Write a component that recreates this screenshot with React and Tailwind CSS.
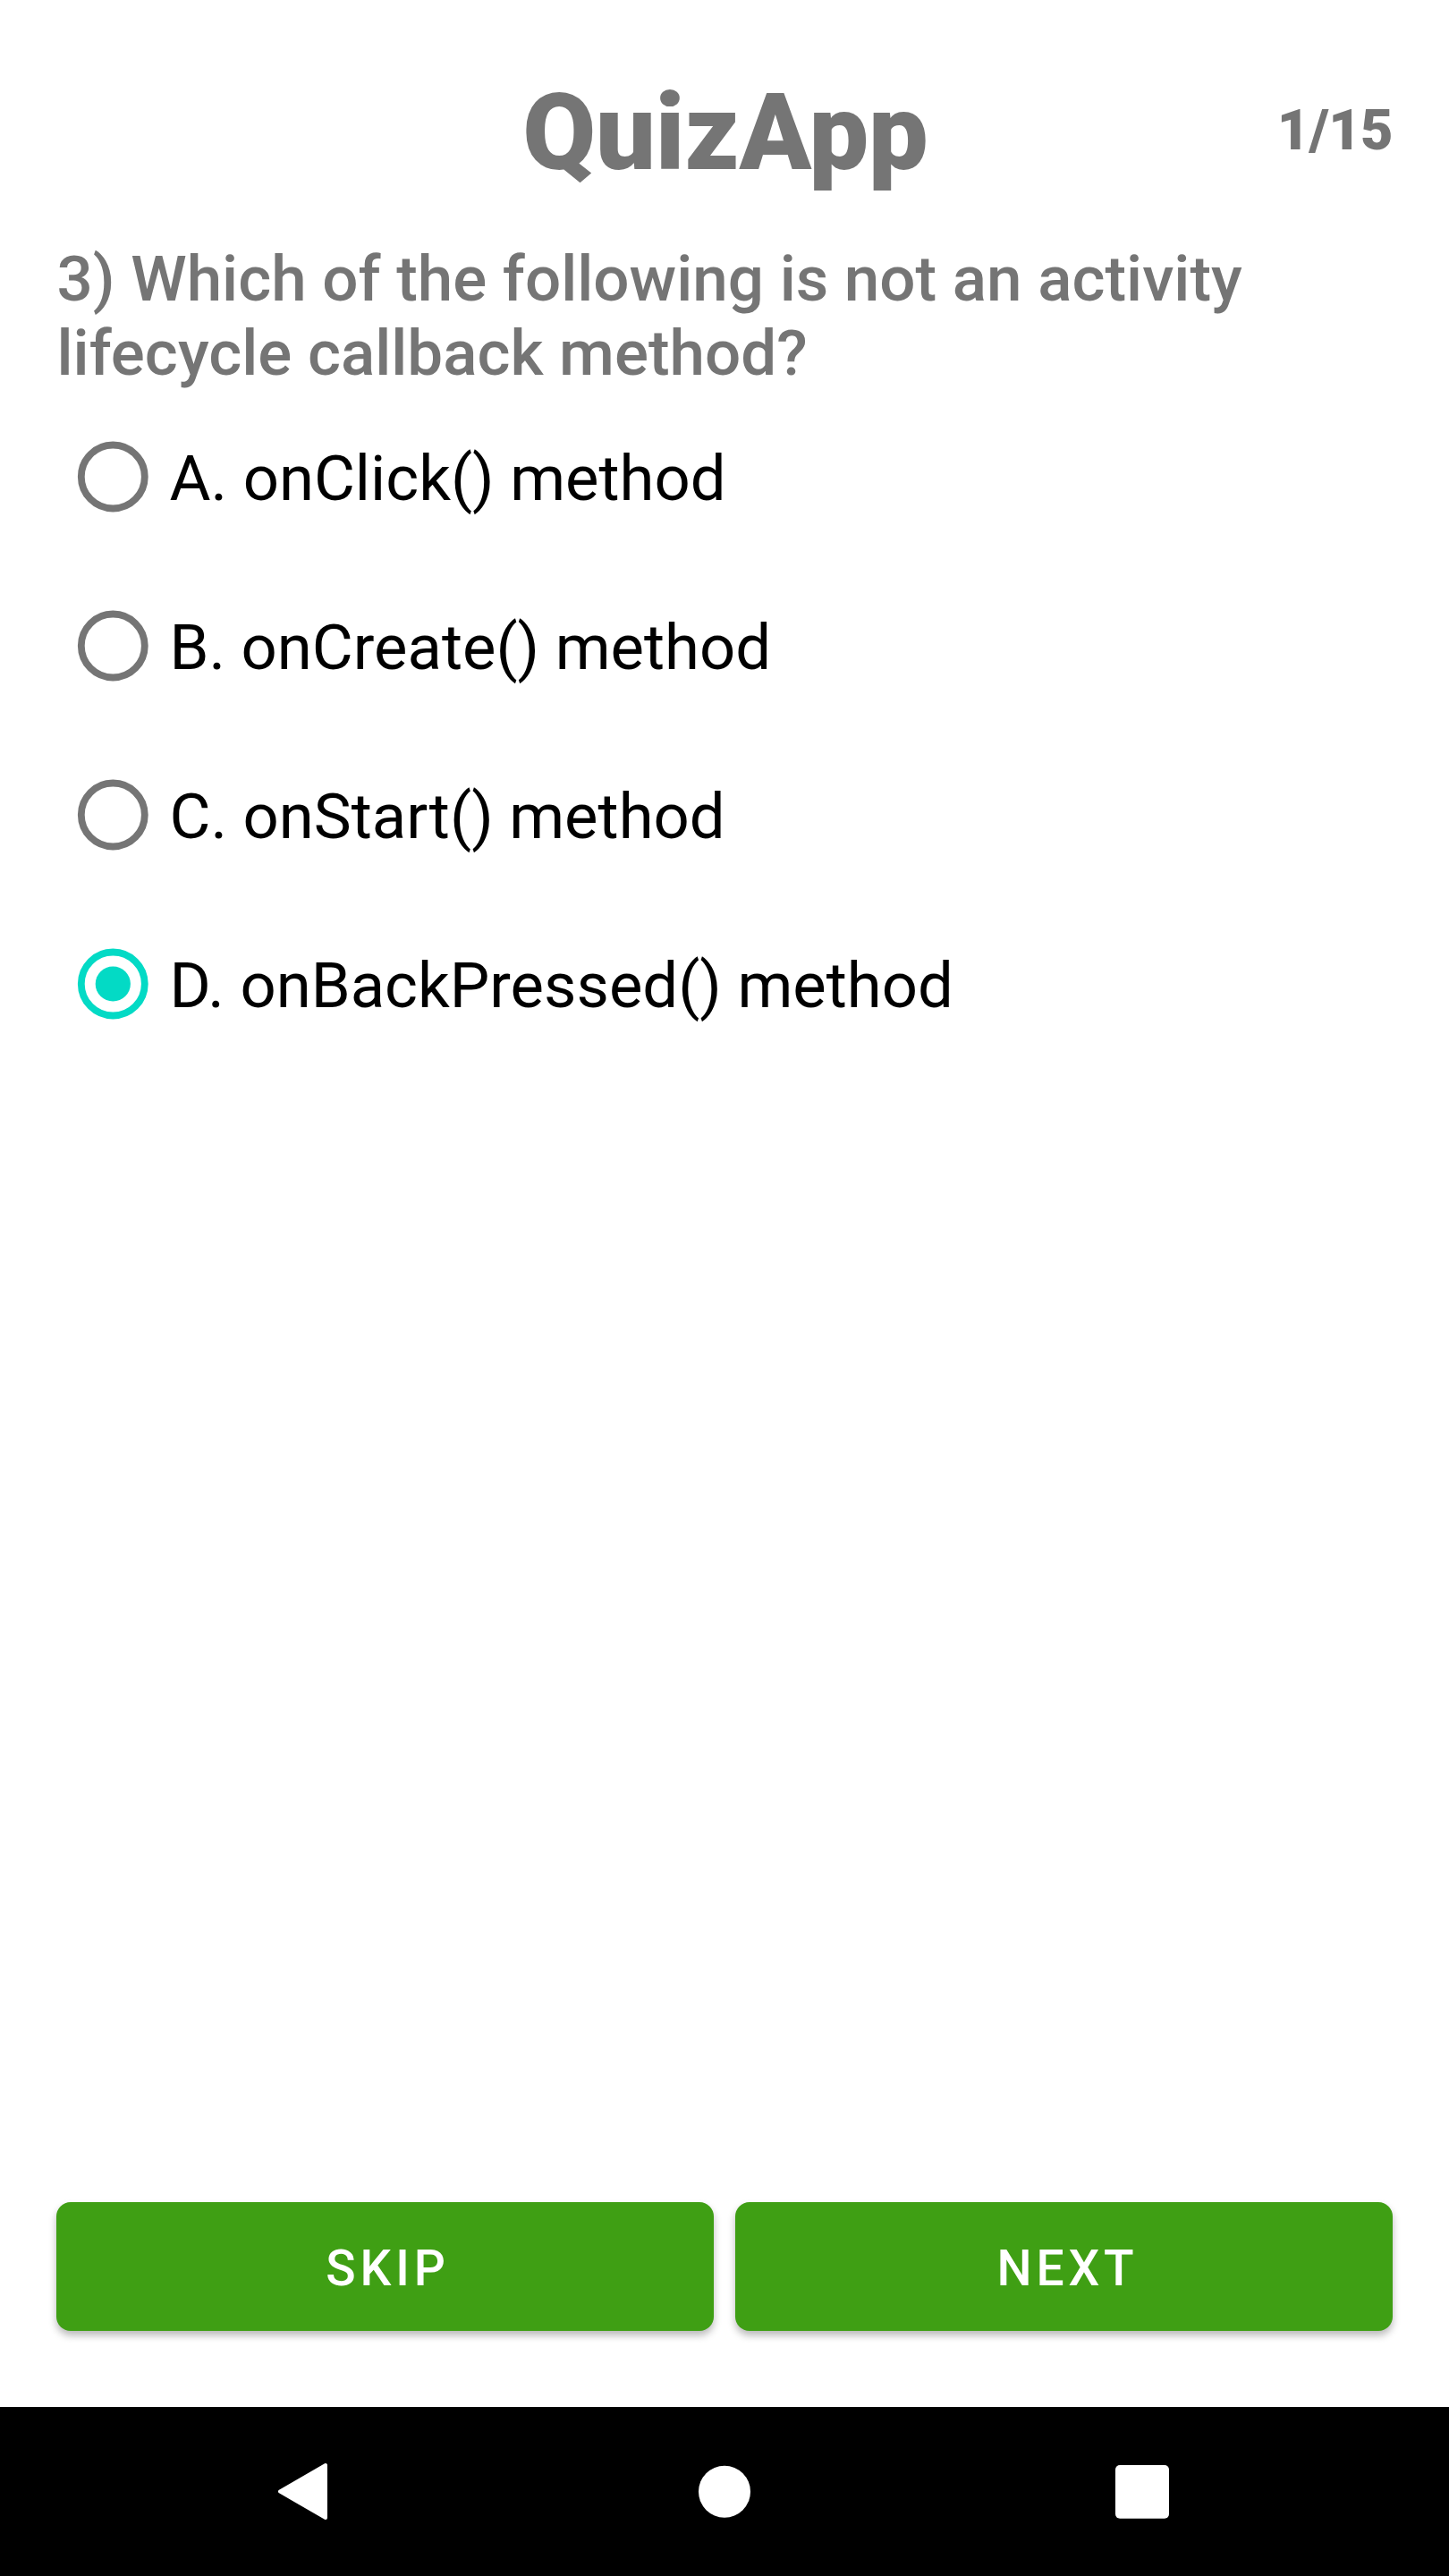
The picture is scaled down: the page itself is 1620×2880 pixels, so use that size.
const options = [
  { label: 'A. onClick() method' },
  { label: 'B. onCreate() method' },
  { label: 'C. onStart() method' },
  { label: 'D. onBackPressed() method', selected: true },
];

function Radio({ selected }) {
  return (
    <svg className={selected ? 'size-[80px] text-[#03dac5]' : 'size-[80px] text-[#757575]'} viewBox="0 0 80 80" fill="none">
      <circle cx="40.3" cy="40" r="35.5" stroke="currentColor" strokeWidth="7.8" />
      {selected && <circle cx="40.3" cy="40" r="19.6" fill="currentColor" />}
    </svg>
  );
}

export default function App() {
  return (
    <div className="flex h-[2880px] w-[1620px] flex-col bg-white font-[Roboto,sans-serif] text-[#757575]">
      <header className="grid h-[270px] grid-cols-[1fr_auto_1fr] items-center px-[63px] pt-[24px]">
        <span />
        <h1 className="pl-[2px] pt-[4px] text-[118.5px] font-black leading-[138px]">QuizApp</h1>
        <span className="justify-self-end pb-[3px] text-[63px] font-black leading-[74px] tracking-[-0.6px]">1/15</span>
      </header>
      <p className="ml-[63.5px] w-[1493px] text-[70.95px] font-medium leading-[83px]">
        3) Which of the following is not an activity<br />lifecycle callback method?
      </p>
      <div className="mt-[2px] flex flex-col pl-[86px]">
        {options.map((o) => (
          <label key={o.label} className="flex h-[189px] items-center gap-[23.5px] text-[70.6px] text-black">
            <Radio selected={o.selected} />
            <span className="whitespace-nowrap pt-[6.5px]">{o.label}</span>
          </label>
        ))}
      </div>
      <div className="mt-auto mb-[85px] grid grid-cols-2 gap-[24px] px-[63px] text-[55.125px] font-medium tracking-[4.9px] text-white">
        <button className="h-[144px] rounded-[16px] bg-[#3f9f14] pl-[6px] pt-[5px] shadow-[0_5px_8px_rgba(0,0,0,0.28)]">SKIP</button>
        <button className="h-[144px] rounded-[16px] bg-[#3f9f14] pl-[8px] pt-[5px] shadow-[0_5px_8px_rgba(0,0,0,0.28)]">NEXT</button>
      </div>
      <nav className="h-[189px] shrink-0 bg-black">
        <svg className="h-full w-full" viewBox="0 0 1620 189" fill="white">
          <path d="M313 94.6 364 65V124Z" stroke="white" strokeWidth="4" strokeLinejoin="round" />
          <circle cx="810" cy="94.7" r="29" />
          <rect x="1247" y="65" width="60" height="59.8" rx="5" />
        </svg>
      </nav>
    </div>
  );
}
